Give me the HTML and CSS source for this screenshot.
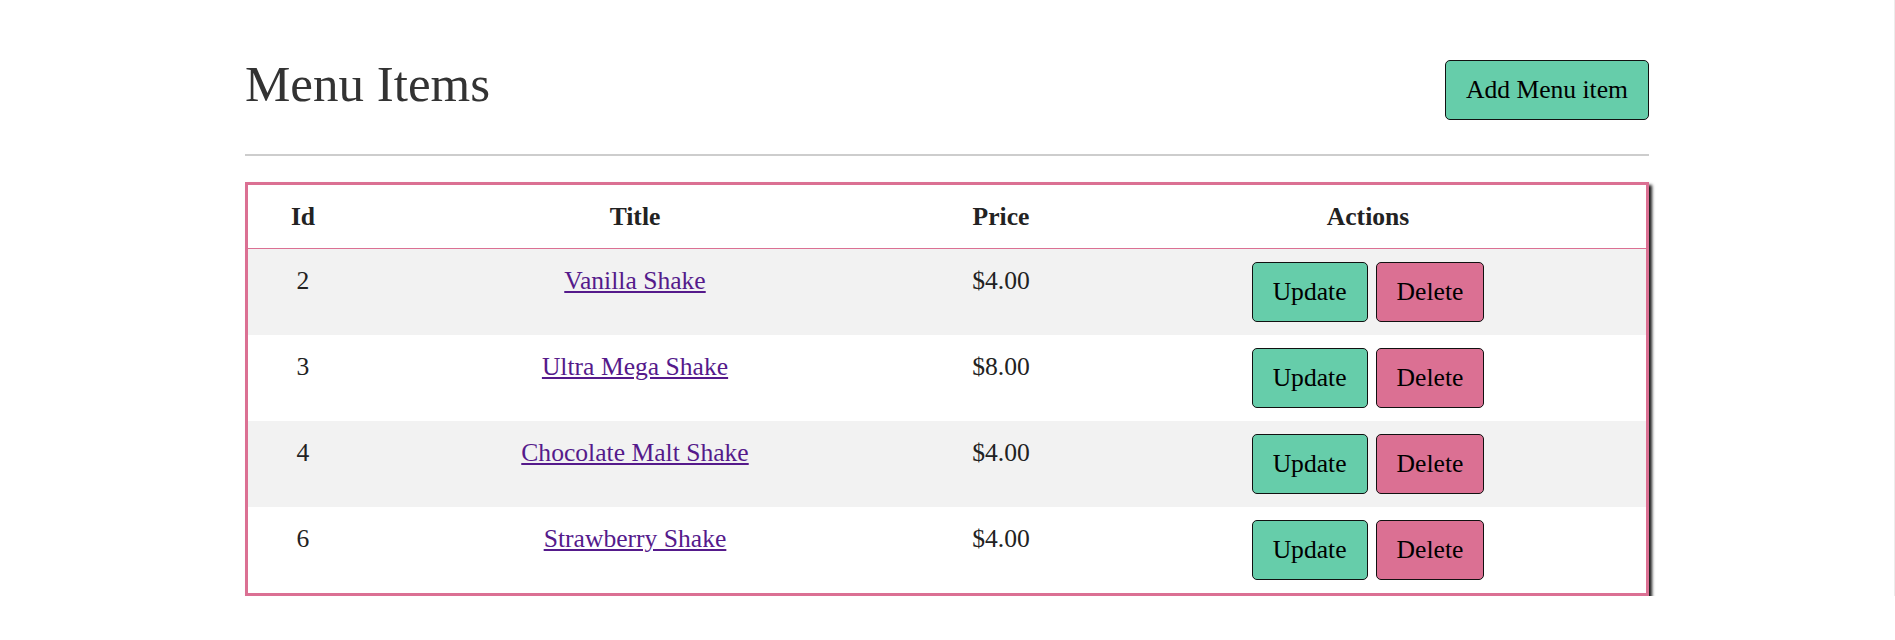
FILE: index.html
```html
<!DOCTYPE html>
<html lang="en">
<head>
<meta charset="utf-8">
<title>Menu Items</title>
<link rel="stylesheet" href="styles.css">
</head>
<body>
<div class="page">
  <div class="header">
    <h1 class="title">Menu Items</h1>
    <button class="btn btn-add">Add Menu item</button>
  </div>
  <hr class="divider">
  <div class="table-wrap">
    <table class="menu-table">
      <colgroup>
        <col class="col-id">
        <col class="col-title">
        <col class="col-price">
        <col class="col-actions">
      </colgroup>
      <thead>
        <tr><th>Id</th><th>Title</th><th>Price</th><th>Actions</th></tr>
      </thead>
      <tbody>
        <tr>
          <td>2</td>
          <td><a class="item-link" href="#">Vanilla Shake</a></td>
          <td>$4.00</td>
          <td class="actions"><div class="btn-group"><button class="btn btn-update">Update</button><button class="btn btn-delete">Delete</button></div></td>
        </tr>
        <tr>
          <td>3</td>
          <td><a class="item-link" href="#">Ultra Mega Shake</a></td>
          <td>$8.00</td>
          <td class="actions"><div class="btn-group"><button class="btn btn-update">Update</button><button class="btn btn-delete">Delete</button></div></td>
        </tr>
        <tr>
          <td>4</td>
          <td><a class="item-link" href="#">Chocolate Malt Shake</a></td>
          <td>$4.00</td>
          <td class="actions"><div class="btn-group"><button class="btn btn-update">Update</button><button class="btn btn-delete">Delete</button></div></td>
        </tr>
        <tr>
          <td>6</td>
          <td><a class="item-link" href="#">Strawberry Shake</a></td>
          <td>$4.00</td>
          <td class="actions"><div class="btn-group"><button class="btn btn-update">Update</button><button class="btn btn-delete">Delete</button></div></td>
        </tr>
      </tbody>
    </table>
  </div>
</div>
</body>
</html>
```

FILE: styles.css
```css
html {
  border-right: 1px solid #ececec;
  background: #fff;
}
body {
  margin: 0;
  font-family: "Liberation Serif", "Times New Roman", serif;
  color: #222;
}
.page {
  width: 1404px;
  margin: 0 auto;
}
.header {
  display: flex;
  justify-content: space-between;
  align-items: flex-start;
  padding-top: 55px;
}
.title {
  margin: 0;
  font-size: 51px;
  line-height: 59px;
  font-weight: normal;
  color: #333;
}
.btn {
  font-family: "Liberation Serif", "Times New Roman", serif;
  font-size: 25.6px;
  line-height: 28px;
  color: #000;
  border: 1px solid #111;
  border-radius: 5px;
  padding: 15px 20px;
  cursor: pointer;
}
.btn-add {
  margin-top: 5px;
  background: #66cdaa;
}
.btn-update {
  background: #66cdaa;
}
.btn-delete {
  background: #db7093;
}
.divider {
  margin: 34px 0 0;
  height: 0;
  border: 0;
  border-top: 2px solid #cdcdcd;
}
.table-wrap {
  margin-top: 26px;
  border: 3px solid #db7093;
  box-shadow: 3px 3px 3px rgba(0, 0, 0, 0.9);
}
.menu-table {
  width: 100%;
  border-collapse: separate;
  border-spacing: 0;
  table-layout: fixed;
  font-size: 25.6px;
}
.col-id { width: 110px; }
.col-title { width: 554px; }
.col-price { width: 178px; }
.col-actions { width: 556px; }
.menu-table th,
.menu-table td {
  padding: 13px;
  line-height: 37px;
  text-align: center;
  vertical-align: top;
}
.menu-table th {
  font-weight: bold;
  border-bottom: 1px solid #db7093;
}
.menu-table tbody tr:nth-child(odd) {
  background: #f2f2f2;
}
.btn-group {
  display: flex;
  justify-content: center;
  gap: 8px;
}
.item-link {
  color: #551a8b;
  text-decoration: underline;
}
```
